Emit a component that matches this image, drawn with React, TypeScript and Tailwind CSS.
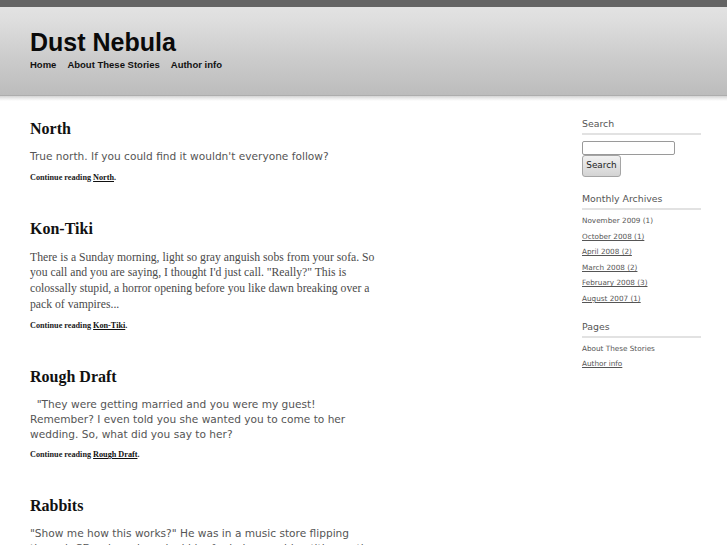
import React from "react";

const sans = { fontFamily: '"DejaVu Sans", Verdana, sans-serif' };

function ContinueLink({ title }: { title: string }) {
  return (
    <p className="mt-[8px] text-[8.2px] leading-[12px] font-bold text-[#222] font-['Liberation_Serif',serif]">
      Continue reading <a className="underline text-[#111]" href="#">{title}</a>.
    </p>
  );
}

export default function App() {
  const archives = [
    { t: "November 2009 (1)", u: false },
    { t: "October 2008 (1)", u: true },
    { t: "April 2008 (2)", u: true },
    { t: "March 2008 (2)", u: true },
    { t: "February 2008 (3)", u: true },
    { t: "August 2007 (1)", u: true },
  ];
  return (
    <div className="w-[727px] h-[545px] overflow-hidden bg-white">
      <div className="h-[7px] bg-[#646464]" />
      <header className="h-[89px] border-b border-[#adadad] bg-[linear-gradient(to_bottom,#e2e2e2_0%,#dedede_15%,#cfcfcf_50%,#bcbcbc_100%)] pt-[23px] pl-[30px]">
        <h1 className="text-[25px] leading-[25px] font-bold text-[#0a0a0a] font-['Liberation_Sans',Arial,sans-serif]">
          Dust Nebula
        </h1>
        <nav className="mt-[4px] flex gap-[11px] text-[9.5px] leading-[12px] font-bold text-[#111] font-['Liberation_Sans',Arial,sans-serif]">
          <a href="#">Home</a>
          <a href="#">About These Stories</a>
          <a href="#">Author info</a>
        </nav>
      </header>
      <div className="h-[5px] bg-[linear-gradient(to_bottom,#d4d4d4,#ececec_50%,#ffffff)]" />
      <div className="flex pl-[30px]">
        <main className="w-[351px] pt-[18px]">
          <article>
            <h2 className="text-[16px] leading-[20px] font-bold text-[#111] font-['Liberation_Serif',serif]">North</h2>
            <p className="mt-[10px] text-[10.6px] leading-[14.6px] text-[#555]" style={sans}>
              True north. If you could find it wouldn't everyone follow?
            </p>
            <ContinueLink title="North" />
          </article>
          <article className="mt-[35px]">
            <h2 className="text-[16px] leading-[20px] font-bold text-[#111] font-['Liberation_Serif',serif]">Kon-Tiki</h2>
            <p className="mt-[11px] text-[11.7px] leading-[15.7px] text-[#4a4a4a] font-['Liberation_Serif',serif]">
              There is a Sunday morning, light so gray anguish sobs from your sofa. So you call and you are saying, I thought I'd just call. "Really?" This is colossally stupid, a horror opening before you like dawn breaking over a pack of vampires...
            </p>
            <ContinueLink title="Kon-Tiki" />
          </article>
          <article className="mt-[35px]">
            <h2 className="text-[16px] leading-[20px] font-bold text-[#111] font-['Liberation_Serif',serif]">Rough Draft</h2>
            <p className="mt-[10px] text-[10.6px] leading-[14.6px] text-[#555]" style={sans}>
              {"\u00a0\u00a0"}"They were getting married and you were my guest! Remember? I even told you she wanted you to come to her wedding. So, what did you say to her?
            </p>
            <ContinueLink title="Rough Draft" />
          </article>
          <article className="mt-[35px]">
            <h2 className="text-[16px] leading-[20px] font-bold text-[#111] font-['Liberation_Serif',serif]">Rabbits</h2>
            <p className="mt-[10px] text-[10.6px] leading-[14.6px] text-[#555]" style={sans}>
              "Show me how this works?" He was in a music store flipping through CDs when she asked him for help searching titles on the shelves. She was holding a list.
            </p>
            <ContinueLink title="Rabbits" />
          </article>
        </main>
        <aside className="ml-auto mr-[26px] w-[119px] pt-[16px] text-[#555]" style={sans}>
          <section>
            <h3 className="text-[9.4px] leading-[14px] pb-[2px] border-b-2 border-[#e2e2e2]">Search</h3>
            <input
              type="text"
              className="mt-[6px] block w-[93px] h-[14px] border border-[#9a9a9a] rounded-[2px] bg-white"
            />
            <button className="block w-[39px] h-[22px] border border-[#a5a5a5] rounded-[3px] bg-[linear-gradient(to_bottom,#f2f2f2,#d3d3d3)] text-[8.9px] text-[#222]" style={sans}>
              Search
            </button>
          </section>
          <section className="mt-[15px]">
            <h3 className="text-[9.4px] leading-[14px] pb-[2px] border-b-2 border-[#e2e2e2]">Monthly Archives</h3>
            <ul className="mt-[3px] text-[7.25px] leading-[15.6px]">
              {archives.map((a) => (
                <li key={a.t}>
                  <a href="#" className={a.u ? "underline" : ""}>{a.t}</a>
                </li>
              ))}
            </ul>
          </section>
          <section className="mt-[13px]">
            <h3 className="text-[9.4px] leading-[14px] pb-[2px] border-b-2 border-[#e2e2e2]">Pages</h3>
            <ul className="mt-[3px] text-[7.25px] leading-[15.6px]">
              <li><a href="#">About These Stories</a></li>
              <li><a href="#" className="underline">Author info</a></li>
            </ul>
          </section>
        </aside>
      </div>
    </div>
  );
}
